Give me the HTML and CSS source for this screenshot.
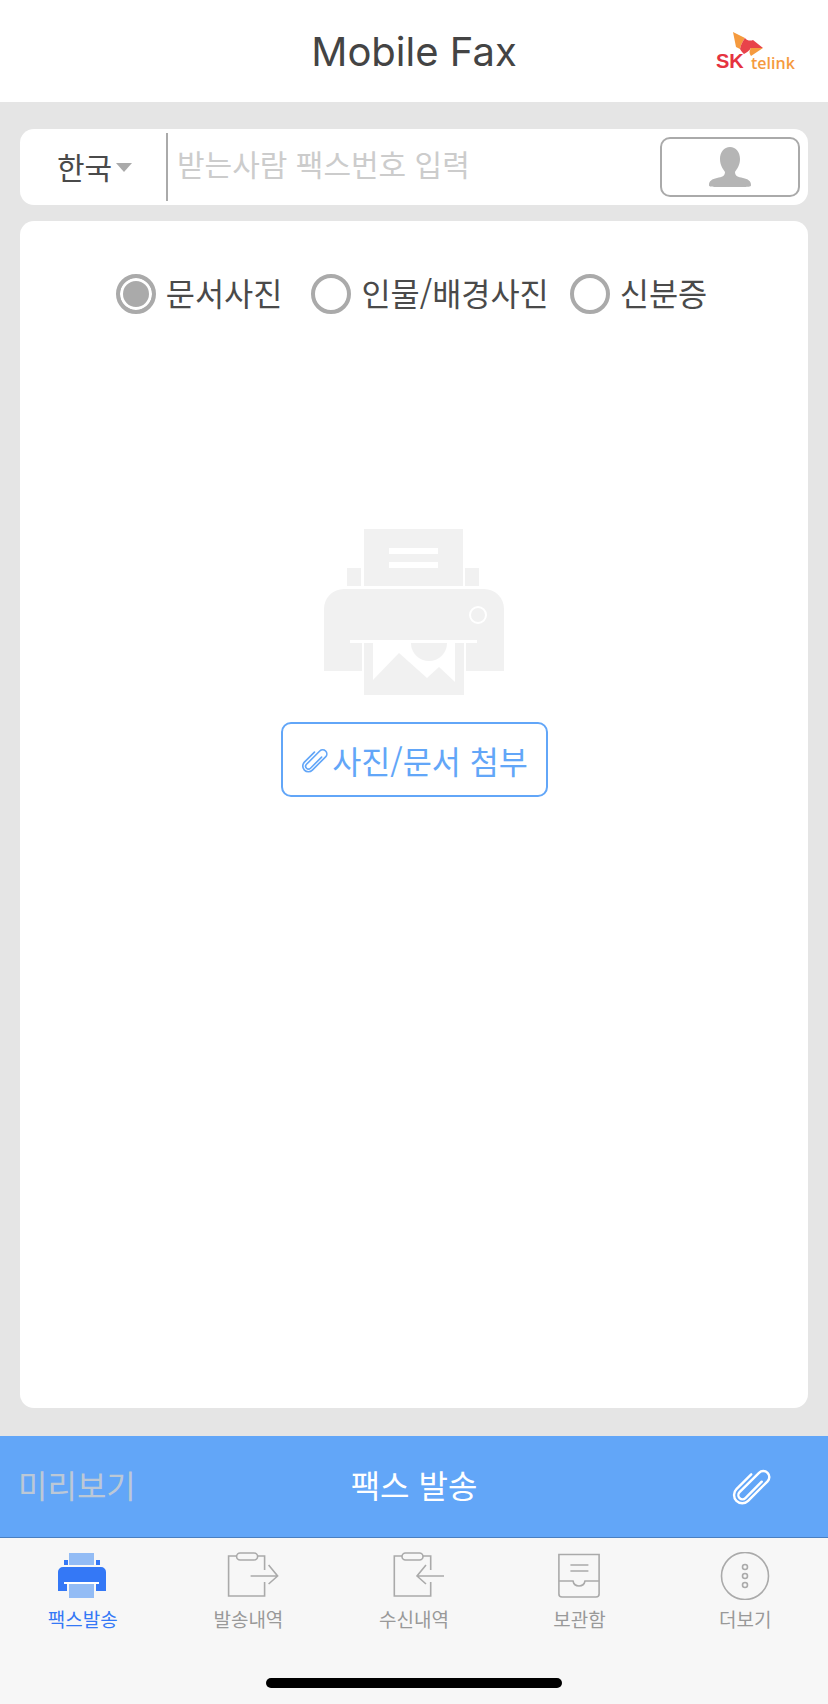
FILE: index.html
```html
<!DOCTYPE html>
<html lang="ko">
<head>
    <meta charset="UTF-8">
    <meta name="viewport" content="width=device-width, initial-scale=1.0">
    <title>Mobile Fax</title>
    <link rel="stylesheet" href="styles.css">
</head>
<body>
    <svg class="defs" width="0" height="0">
        <symbol id="clip" viewBox="0 0 40 40">
            <path transform="rotate(45 20 20)" fill="none" stroke="currentColor" stroke-width="2.2" stroke-linecap="round" d="M23.5 11V32a3.75 3.75 0 0 1-7.5 0V7a5.5 5.5 0 0 1 11 0V32a7.5 7.5 0 0 1-15 0V13"/>
        </symbol>
    </svg>

    <header class="top">
        <h1>Mobile Fax</h1>
        <div class="logo">
            <svg class="logo-wing" viewBox="0 0 36 26" width="36" height="26">
                <path fill="#f59a3e" d="M1 0L13 6C11 9 9 12 8 17L4 15Z"/>
                <path fill="#e8434a" d="M13 6C15 9 19 9 21 8L31 16L19 16C17 19 15 20 12 22C10 20 9 19 8 17C9 12 11 9 13 6Z"/>
                <path fill="#f59a3e" d="M31 16L19 24C17 21 17 19 19 16Z"/>
            </svg>
            <span class="logo-sk">SK</span><span class="logo-telink">telink</span>
        </div>
    </header>

    <main class="content">
        <div class="phone-bar">
            <button class="country">한국<span class="caret"></span></button>
            <input class="phone-input" type="text" placeholder="받는사람 팩스번호 입력">
            <button class="contact">
                <svg viewBox="0 0 44 42" width="44" height="42">
                    <path fill="#b5b5b5" d="M22 1C28 1 32 6 32 13C32 19 29 23 27 26C27 30 30 31 35 32C40 33 43 35 43 39C43 41 42 41 22 41C2 41 1 41 1 39C1 35 4 33 9 32C14 31 17 30 17 26C15 23 12 19 12 13C12 6 16 1 22 1Z"/>
                </svg>
            </button>
        </div>

        <section class="card">
            <div class="radios">
                <label class="radio radio-on"><span class="dot"></span>문서사진</label>
                <label class="radio"><span class="dot"></span>인물/배경사진</label>
                <label class="radio"><span class="dot"></span>신분증</label>
            </div>

            <svg class="printer" viewBox="0 0 180 166" width="180" height="166">
                <g fill="#f1f1f1">
                    <path d="M40 0H139V57H40Z"/>
                    <path d="M23 39H37V57H23ZM141 39H155V57H141Z"/>
                    <path d="M20 60H160A20 20 0 0 1 180 80V142H142V114H38V142H0V80A20 20 0 0 1 20 60Z"/>
                    <path d="M40 114H140V166H40Z"/>
                </g>
                <g fill="#fff">
                    <path d="M65 19H114V25H65ZM65 33H114V39H65Z"/>
                    <path d="M26 111H153V114H26Z"/>
                    <path d="M49 114V151L75 124L103 149L115 138L131 153V114Z"/>
                </g>
                <circle cx="154" cy="86" r="8" fill="none" stroke="#fff" stroke-width="2"/>
                <path fill="#f1f1f1" d="M87 114H123A18 18 0 0 1 87 114Z"/>
            </svg>

            <button class="attach">
                <svg width="30" height="30"><use href="#clip"/></svg>사진/문서 첨부
            </button>
        </section>
    </main>

    <div class="send-bar">
        <span class="preview">미리보기</span>
        <span class="send">팩스 발송</span>
        <svg class="send-clip" width="44" height="44"><use href="#clip"/></svg>
    </div>

    <nav class="tabs">
        <a class="tab tab-on">
            <svg viewBox="0 0 64 48" width="64" height="48">
                <path fill="#93bcf5" d="M18 1H43V13H18ZM18 30H43V46H18Z"/>
                <path fill="#3478f6" d="M13 8H17V13H13ZM45 8H49V13H45Z"/>
                <path fill="#3478f6" d="M12 15H50A5 5 0 0 1 55 20V39H45V30H16V39H7V20A5 5 0 0 1 12 15Z"/>
                <path fill="#fff" d="M13 30H48V32H13Z"/>
            </svg>
            팩스발송
        </a>
        <a class="tab">
            <svg viewBox="0 0 64 48" width="64" height="48" class="line">
                <path d="M48.6 18V4H12.6V44H48.6V30"/>
                <rect x="20.6" y="1" width="21" height="7" rx="3.5" fill="#f7f7f7"/>
                <path d="M34.6 24H61.6M52.6 13L61.6 24L52.6 32"/>
            </svg>
            발송내역
        </a>
        <a class="tab">
            <svg viewBox="0 0 64 48" width="64" height="48" class="line">
                <path d="M48.7 18V4H12.3V44H48.7V30"/>
                <rect x="20" y="1" width="21" height="7" rx="3.5" fill="#f7f7f7"/>
                <path d="M62 24H35M44 13L35 24L44 32"/>
            </svg>
            수신내역
        </a>
        <a class="tab">
            <svg viewBox="0 0 64 48" width="64" height="48" class="line">
                <path d="M10.9 2.5H51.1V42Q51.1 45 48 45H14Q10.9 45 10.9 42Z"/>
                <path d="M10.9 29H25Q26 34 31 34Q36 34 37 29H51.1"/>
                <path d="M22.4 13H40.4M22.4 19H40.4"/>
            </svg>
            보관함
        </a>
        <a class="tab">
            <svg viewBox="0 0 64 48" width="64" height="48" class="line">
                <circle cx="32" cy="24" r="23.5"/>
                <circle cx="32" cy="15" r="2.5"/>
                <circle cx="32" cy="24" r="2.5"/>
                <circle cx="32" cy="33" r="2.5"/>
            </svg>
            더보기
        </a>
        <div class="home-bar"></div>
    </nav>
</body>
</html>
```

FILE: styles.css
```css
* {
    box-sizing: border-box;
}

html, body {
    margin: 0;
    height: 100%;
}

body {
    display: flex;
    flex-direction: column;
    height: 1704px;
    overflow: hidden;
    font-family: "Noto Sans CJK KR", "Noto Sans", sans-serif;
    background-color: #e5e5e5;
    color: #444;
}

button {
    font-family: inherit;
    background: none;
    padding: 0;
    border: 0;
    cursor: pointer;
}

.defs {
    position: absolute;
}

.top {
    position: relative;
    height: 102px;
    flex: none;
    display: flex;
    align-items: center;
    justify-content: center;
    background-color: white;
}

.top h1 {
    margin: 0;
    font-family: Inter, sans-serif;
    font-size: 40px;
    font-weight: 400;
    color: #444;
}

.logo {
    position: absolute;
    left: 716px;
    top: 32px;
    width: 80px;
    height: 40px;
}

.logo-wing {
    position: absolute;
    left: 16px;
    top: 0;
}

.logo-sk {
    position: absolute;
    left: 0;
    top: 19px;
    font-family: "Liberation Sans", sans-serif;
    font-size: 20px;
    font-weight: bold;
    line-height: 20px;
    color: #e5333f;
}

.logo-telink {
    position: absolute;
    left: 35px;
    top: 21px;
    font-family: "Open Sans", sans-serif;
    font-size: 16px;
    font-weight: 600;
    line-height: 20px;
    color: #f59a3e;
}

.content {
    flex: 1;
    display: flex;
    flex-direction: column;
    gap: 16px;
    padding: 27px 20px 28px;
}

.phone-bar {
    height: 76px;
    flex: none;
    display: flex;
    align-items: center;
    background-color: white;
    border-radius: 14px;
}

.country {
    width: 146px;
    display: flex;
    align-items: center;
    padding: 0 0 2px 37px;
    font-size: 30px;
    color: #4a4a4a;
}

.caret {
    margin: 3px 0 0 4px;
    border-left: 8px solid transparent;
    border-right: 8px solid transparent;
    border-top: 9px solid #aaa;
}

.phone-input {
    flex: 1;
    min-width: 0;
    height: 68px;
    padding: 0 0 8px 9px;
    border: 0;
    border-left: 2px solid #aaa;
    outline: none;
    font-family: inherit;
    font-size: 30px;
}

.phone-input::placeholder {
    color: #ccc;
}

.contact {
    width: 140px;
    height: 60px;
    margin: 0 8px 0 4px;
    display: flex;
    align-items: center;
    justify-content: center;
    border: 2px solid #aaa;
    border-radius: 10px;
}

.card {
    flex: 1;
    display: flex;
    flex-direction: column;
    align-items: center;
    background-color: white;
    border-radius: 14px;
}

.radios {
    display: flex;
    margin-top: 51px;
    padding-right: 5px;
}

.radio {
    display: flex;
    align-items: center;
    gap: 10px;
    margin-right: 29px;
    padding-bottom: 3px;
    font-size: 31.7px;
    line-height: 40px;
    color: #4a4a4a;
}

.radio:nth-child(2) {
    margin-right: 21px;
}

.radio:last-child {
    margin-right: 0;
}

.dot {
    width: 40px;
    height: 40px;
    margin-bottom: -3px;
    border: 4px solid #aaa;
    border-radius: 50%;
}

.radio-on .dot {
    background-color: #aaa;
    box-shadow: inset 0 0 0 3px white;
}

.printer {
    margin-top: 214px;
}

.attach {
    width: 267px;
    height: 75px;
    margin-top: 27px;
    display: flex;
    align-items: center;
    justify-content: center;
    gap: 2px;
    border: 2px solid #62a6f8;
    border-radius: 10px;
    font-size: 31.6px;
    color: #62a6f8;
}

.send-bar {
    height: 102px;
    flex: none;
    display: flex;
    align-items: center;
    justify-content: center;
    position: relative;
    padding-bottom: 6px;
    background-color: #62a6f8;
    border-bottom: 1px solid #4a7fc0;
    font-size: 32px;
}

.preview {
    position: absolute;
    left: 18px;
    font-size: 32px;
    color: #bcc8d6;
}

.send {
    color: white;
}

.send-clip {
    position: absolute;
    left: 730px;
    top: 28px;
    color: white;
}

.tabs {
    position: relative;
    height: 166px;
    flex: none;
    display: grid;
    grid-template-columns: repeat(5, 1fr);
    padding-top: 14px;
    background-color: #f7f7f7;
}

.tab {
    display: flex;
    flex-direction: column;
    align-items: center;
    gap: 4px;
    font-size: 19px;
    line-height: 30px;
    color: #999;
}

.tab-on {
    color: #3478f6;
}

.line {
    fill: none;
    stroke: #aaa;
    stroke-width: 1.6;
}

.home-bar {
    position: absolute;
    left: 266px;
    bottom: 16px;
    width: 296px;
    height: 10px;
    background-color: black;
    border-radius: 5px;
}
```
